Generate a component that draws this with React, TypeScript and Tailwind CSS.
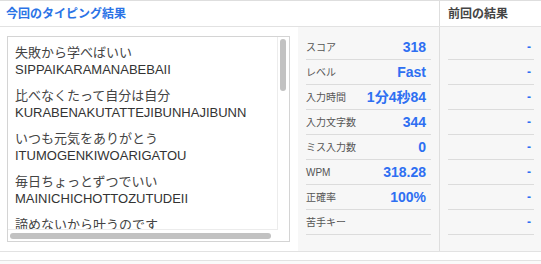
import React from "react";

interface IStat {
  label: string;
  value: string;
}

const stats: IStat[] = [
  { label: "スコア", value: "318" },
  { label: "レベル", value: "Fast" },
  { label: "入力時間", value: "1分4秒84" },
  { label: "入力文字数", value: "344" },
  { label: "ミス入力数", value: "0" },
  { label: "WPM", value: "318.28" },
  { label: "正確率", value: "100%" },
  { label: "苦手キー", value: "" },
];

const phrases = [
  { jp: "失敗から学べばいい", roma: "SIPPAIKARAMANABEBAII" },
  { jp: "比べなくたって自分は自分", roma: "KURABENAKUTATTEJIBUNHAJIBUNN" },
  { jp: "いつも元気をありがとう", roma: "ITUMOGENKIWOARIGATOU" },
  { jp: "毎日ちょっとずつでいい", roma: "MAINICHICHOTTOZUTUDEII" },
  { jp: "諦めないから叶うのです", roma: "AKIRAMENAIKARAKANAUNODESU" },
];

const App: React.FC = () => {
  return (
    <div
      className="w-[541px] h-[264px] bg-white overflow-hidden"
      style={{ fontFamily: '"Liberation Sans", "Noto Sans CJK JP", sans-serif' }}
    >
      <div className="border-t border-[#dedede]">
        {/* header */}
        <div className="flex h-[26px] border-b border-[#e2e2e2]">
          <div className="w-[439px] flex items-center pl-[6px] text-[12px] font-bold text-[#2b73e6]">
            今回のタイピング結果
          </div>
          <div className="flex-1 flex items-center pl-[8px] border-l border-[#dedede] text-[12px] font-bold text-[#444]">
            前回の結果
          </div>
        </div>

        {/* body */}
        <div className="flex h-[225px] border-b border-[#e2e2e2]">
          <div className="w-[298px] pt-[9px] pl-[7px] bg-white">
            <div className="relative w-[283px] h-[206px] border border-[#d4d4d4] bg-white">
              <div className="absolute left-0 top-0 w-[270px] h-[193px] border-r border-b border-[#ececec] overflow-hidden pl-[7px] pt-[7px] flex flex-col gap-[9px]">
                {phrases.map((p) => (
                  <div key={p.roma} className="text-[13px] leading-[17px] whitespace-nowrap">
                    <div className="text-[#444]">{p.jp}</div>
                    <div className="text-[#333]">{p.roma}</div>
                  </div>
                ))}
              </div>
              <div className="absolute left-[272px] top-[2px] w-[6px] h-[52px] rounded-full bg-[#c2c2c2]" />
              <div className="absolute left-[2px] top-[196px] w-[261px] h-[6px] rounded-full bg-[#c2c2c2]" />
            </div>
          </div>

          <div className="w-[141px] bg-[#f7f7f7] px-[8px] pt-[8px]">
            {stats.map((s) => (
              <div
                key={s.label}
                className="h-[25px] flex items-center justify-between border-b border-[#dcdcdc] pr-[5px]"
              >
                <span className="text-[10px] text-[#555]">{s.label}</span>
                <span className="text-[14px] font-bold text-[#2e6ff2]">{s.value}</span>
              </div>
            ))}
          </div>

          <div className="flex-1 bg-[#f7f7f7] border-l border-[#dedede] pl-[8px] pr-[7px] pt-[8px]">
            {stats.map((s) => (
              <div
                key={s.label}
                className="h-[25px] flex items-center justify-end border-b border-[#dcdcdc] pr-[3px]"
              >
                <span className="text-[12px] font-bold text-[#2e6ff2]">-</span>
              </div>
            ))}
          </div>
        </div>

        <div className="h-[8px] bg-white" />
        <div className="h-[4px] border-t border-[#e2e2e2] bg-[#fafafa]" />
      </div>
    </div>
  );
};

export default App;
